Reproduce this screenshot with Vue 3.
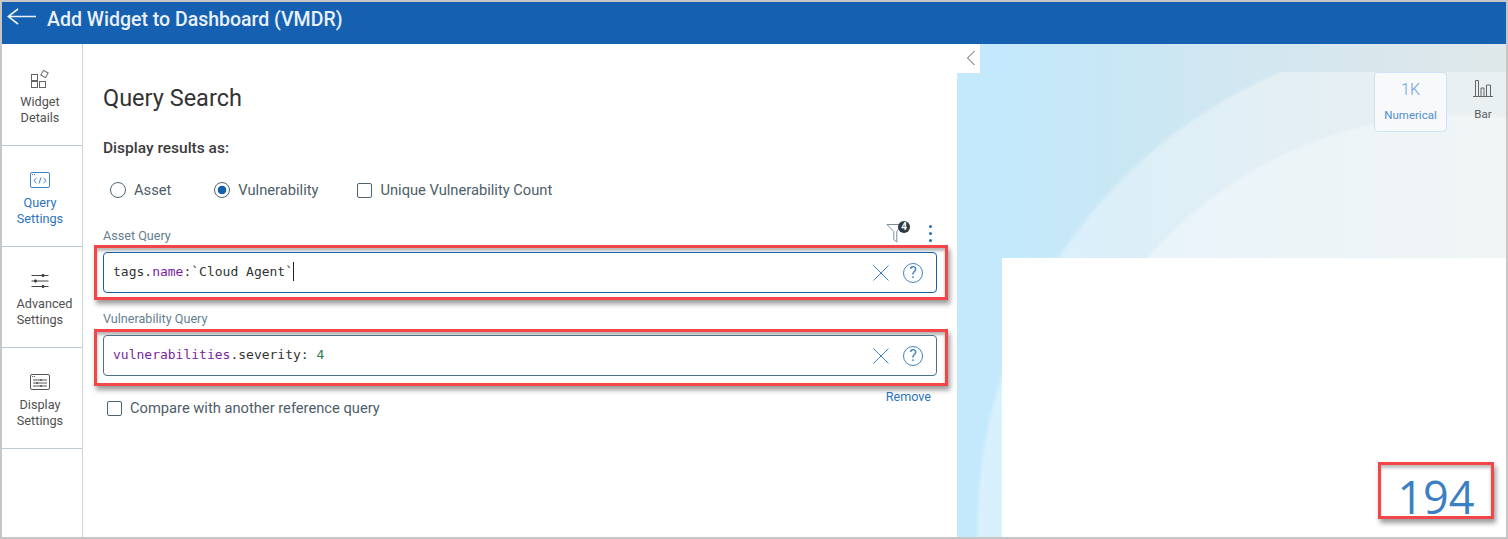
<script setup>
const navItems = [
  { id: 'widget', label: ['Widget', 'Details'] },
  { id: 'query', label: ['Query', 'Settings'], active: true },
  { id: 'advanced', label: ['Advanced', 'Settings'] },
  { id: 'display', label: ['Display', 'Settings'] },
]
</script>

<template>
  <div class="frame">
    <header class="topbar">
      <svg class="back" width="30" height="20" viewBox="0 0 30 20" fill="none" stroke="#e9f0f8" stroke-width="1.6">
        <path d="M1 9.5H29M11 2L1.2 9.5L11 17" />
      </svg>
      <h1>Add Widget to Dashboard (VMDR)</h1>
    </header>
    <div class="body">
      <nav class="side">
        <div v-for="n in navItems" :key="n.id" class="nav-item" :class="{ active: n.active }">
          <svg v-if="n.id === 'widget'" width="20" height="20" viewBox="0 0 20 20" fill="none" stroke="#666" stroke-width="1">
            <rect x="1.5" y="5.5" width="6" height="6" /><rect x="1.5" y="12.5" width="6" height="6" /><rect x="9.5" y="12.5" width="6" height="6" />
            <rect x="11.8" y="2.3" width="5.4" height="5.4" transform="rotate(30 14.5 5)" />
          </svg>
          <svg v-else-if="n.id === 'query'" width="20" height="20" viewBox="0 0 20 20" fill="none" stroke="#3a82c9" stroke-width="1">
            <rect x="0.5" y="2.5" width="19" height="15" rx="1.5" />
            <path d="M2 4.5H6" stroke-dasharray="1 1" />
            <path d="M6.5 8L3.8 10.5L6.5 13M13.5 8L16.2 10.5L13.5 13M11 7.5L9 13.5" />
          </svg>
          <svg v-else-if="n.id === 'advanced'" width="20" height="20" viewBox="0 0 20 20" fill="none" stroke="#444" stroke-width="1">
            <path d="M1.5 4.5H18.5M1.5 10H18.5M1.5 15.5H18.5" />
            <circle cx="13" cy="4.5" r="1.2" fill="#444" /><circle cx="5.5" cy="10" r="1.2" fill="#444" /><circle cx="13" cy="15.5" r="1.2" fill="#444" />
          </svg>
          <svg v-else width="20" height="20" viewBox="0 0 20 20" fill="none" stroke="#555" stroke-width="1">
            <rect x="0.5" y="2.5" width="19" height="15" rx="1.5" />
            <path d="M2 4.5H6" stroke-dasharray="1 1" />
            <path d="M3 8H17M3 11H17M3 14H17" />
            <path d="M11 7V9M7 10V12M11 13V15" stroke-width="1.5" />
          </svg>
          <span class="nav-label">{{ n.label[0] }}<br />{{ n.label[1] }}</span>
        </div>
      </nav>

      <main class="panel">
        <h2>Query Search</h2>
        <div class="display-label">Display results as:</div>
        <div class="options">
          <label class="opt opt-asset"><span class="radio"></span>Asset</label>
          <label class="opt opt-vuln"><span class="radio on"></span>Vulnerability</label>
          <label class="opt"><span class="check"></span>Unique Vulnerability Count</label>
        </div>

        <div class="field-head">
          <span class="field-label head-label">Asset Query</span>
          <div class="tools">
            <span class="filter">
              <svg width="20" height="22" viewBox="0 0 20 22" fill="none" stroke="#7c8f9d" stroke-width="1">
                <path d="M1 3.5H16L10.8 10.5V21L7.8 18.5V10.5Z" />
              </svg>
              <span class="badge">4</span>
            </span>
            <span class="kebab"><i></i><i></i><i></i></span>
          </div>
        </div>
        <div class="redbox first">
          <div class="query focus">
            <code><span>tags.</span><span class="kw">name</span><span>:`Cloud Agent`</span><span class="caret"></span></code>
            <svg class="ic" width="18" height="18" viewBox="0 0 18 18" fill="none" stroke="#3f82c8" stroke-width="1"><path d="M1.5 1.5L16.5 16.5M16.5 1.5L1.5 16.5" /></svg>
            <span class="help">?</span>
          </div>
        </div>

        <div class="field-label second-label">Vulnerability Query</div>
        <div class="redbox second">
          <div class="query">
            <code><span class="kw">vulnerabilities</span><span>.severity: </span><span class="num">4</span></code>
            <svg class="ic" width="18" height="18" viewBox="0 0 18 18" fill="none" stroke="#3f82c8" stroke-width="1"><path d="M1.5 1.5L16.5 16.5M16.5 1.5L1.5 16.5" /></svg>
            <span class="help">?</span>
          </div>
        </div>

        <div class="foot">
          <label class="opt compare"><span class="check"></span>Compare with another reference query</label>
          <a class="remove">Remove</a>
        </div>
      </main>

      <section class="preview">
        <div class="collapse">
          <svg width="10" height="16" viewBox="0 0 10 16" fill="none" stroke="#555" stroke-width="1"><path d="M8.5 1L1.5 8L8.5 15" /></svg>
        </div>
        <div class="band"></div>
        <div class="stage">
          <div class="types">
            <div class="type selected">
              <span class="k">1K</span>
              <span class="t">Numerical</span>
            </div>
            <div class="type bar">
              <svg width="20" height="18" viewBox="0 0 20 18" fill="none" stroke="#666" stroke-width="1">
                <path d="M0 17.5H20M2.5 17V1.5H5.5V17M8 17V9H11V17M13.5 17V6H14.5M14.5 6H17.5V17" />
              </svg>
              <span class="t">Bar</span>
            </div>
          </div>
          <div class="card">
            <div class="count">194</div>
          </div>
        </div>
      </section>
    </div>
  </div>
</template>

<style>
html, body { margin: 0; background: #fff; }
</style>

<style scoped>
.frame {
  box-sizing: border-box;
  width: 1508px;
  height: 539px;
  border: 2px solid #c6c6c6;
  display: flex;
  flex-direction: column;
  overflow: hidden;
  font-family: Roboto, "Liberation Sans", sans-serif;
  color: #444;
}
.topbar {
  height: 42px;
  flex: none;
  background: #1560b0;
  display: flex;
  align-items: flex-start;
  padding-left: 5px;
  gap: 10px;
}
.back { margin-top: 5px; }
.topbar h1 {
  margin: 0;
  font-size: 19.5px;
  font-weight: 500;
  line-height: 36px;
  color: #e9f0f8;
}
.body { flex: 1; display: flex; min-height: 0; }
.side {
  box-sizing: border-box;
  width: 81px;
  flex: none;
  border-right: 1px solid #c8d3dc;
  background: #fff;
  padding-top: 1px;
}
.nav-item {
  box-sizing: border-box;
  height: 101px;
  border-bottom: 1px solid #bcc9d2;
  display: flex;
  flex-direction: column;
  align-items: center;
  padding: 24px 4px 0 0;
  color: #4f4f4f;
}
.nav-item.active { color: #2a74c0; }
.nav-label {
  width: 47px;
  font-size: 12.7px;
  line-height: 16px;
  text-align: center;
  margin-top: 5px;
}
.panel {
  box-sizing: border-box;
  width: 874px;
  flex: none;
  padding: 0 20px;
  background: #fff;
}
.panel h2 {
  margin: 39px 0 0;
  font-size: 23.5px;
  font-weight: 400;
  line-height: 30px;
  color: #333;
}
.display-label {
  margin-top: 25px;
  font-size: 15.5px;
  font-weight: 500;
  line-height: 20px;
  color: #3c3c3c;
}
.options {
  display: flex;
  align-items: center;
  margin-top: 22px;
  padding-left: 7px;
  height: 20px;
}
.opt {
  display: flex;
  align-items: center;
  gap: 8px;
  font-size: 14.7px;
  color: #4e5d68;
}
.opt-asset { margin-right: 43px; }
.opt-vuln { margin-right: 39px; }
.radio {
  box-sizing: border-box;
  width: 16px;
  height: 16px;
  border-radius: 50%;
  border: 1px solid #4e6472;
  display: inline-block;
}
.radio.on {
  background: radial-gradient(circle, #1560b0 0 4px, transparent 4.6px);
}
.check {
  box-sizing: border-box;
  width: 15px;
  height: 15px;
  border: 1px solid #4e6472;
  border-radius: 2px;
  display: inline-block;
}
.field-head {
  display: flex;
  justify-content: space-between;
  align-items: flex-end;
  margin-top: 15px;
  height: 30px;
}
.field-label {
  font-size: 12.6px;
  line-height: 16px;
  color: #66808f;
}
.head-label { margin-bottom: 1px; }
.tools { display: flex; align-items: flex-start; height: 26px; padding-right: 3px; }
.filter { position: relative; width: 20px; height: 22px; margin-top: 2px; margin-right: 20px; }
.badge {
  position: absolute;
  left: 12px;
  top: 0;
  width: 12px;
  height: 12px;
  border-radius: 50%;
  background: #2f3a42;
  color: #fff;
  font-size: 10px;
  font-weight: 700;
  line-height: 12px;
  text-align: center;
}
.kebab { display: flex; flex-direction: column; gap: 4px; margin-top: 6px; width: 8px; align-items: center; }
.kebab i { width: 3px; height: 3px; border-radius: 50%; background: #1e6fbf; }
.redbox {
  box-sizing: border-box;
  margin: 0 -11px 0 -9px;
  border: 3px solid #f44548;
  box-shadow: 2px 4px 5px rgba(0, 0, 0, .4), inset 0 3px 3px rgba(0, 0, 0, .28);
  background: #fff;
}
.redbox.first { padding: 4px 8px 4px 6px; height: 55px; }
.redbox.second { padding: 3px 8px 7px 6px; height: 57px; }
.query {
  box-sizing: border-box;
  height: 41px;
  border: 1px solid #4f6f82;
  border-radius: 4px;
  display: flex;
  align-items: center;
  padding: 0 13px 0 9px;
  background: #fff;
}
.query.focus { border-color: #1560b0; }
.query code {
  flex: 1;
  display: flex;
  align-items: center;
  padding-bottom: 2px;
  font-family: "DejaVu Sans Mono", monospace;
  font-size: 13px;
  white-space: pre;
  color: #333;
}
.kw { color: #7b1fa2; }
.num { color: #2e7d4f; }
.caret { width: 1px; height: 19px; background: #222; margin-left: 0; }
.ic { margin-right: 13px; }
.help {
  box-sizing: border-box;
  width: 20px;
  height: 20px;
  border: 1px solid #3f82c8;
  border-radius: 50%;
  color: #3f82c8;
  font-size: 16px;
  line-height: 18px;
  text-align: center;
}
.second-label { margin-top: 11px; height: 18px; }
.foot {
  display: flex;
  justify-content: space-between;
  height: 40px;
}
.compare { margin: 12px 0 0 4px; height: 20px; color: #4e5d68; }
.remove {
  font-size: 12.6px;
  line-height: 16px;
  margin: 3px 6px 0 0;
  color: #2a72bc;
}
.preview {
  position: relative;
  flex: 1;
  min-width: 0;
  display: flex;
  flex-direction: column;
  background: #c5e9fb;
}
.collapse {
  position: absolute;
  left: 0;
  top: 0;
  box-sizing: border-box;
  width: 23px;
  height: 29px;
  padding: 0 0 2px 4px;
  background: #fff;
  display: flex;
  align-items: center;
  justify-content: center;
}
.band {
  height: 28px;
  flex: none;
  background: linear-gradient(90deg, #c4e9fc 8%, #c9e7f4 31%, #cfe7f2 44%, #d8e7ed 73%, #dfe8ea 100%);
}
.stage {
  flex: 1;
  min-height: 0;
  display: flex;
  flex-direction: column;
  background:
    radial-gradient(circle 415px at 503px 456px, rgba(255, 255, 255, .32) 99%, rgba(255, 255, 255, 0) 100%),
    radial-gradient(circle 500px at 518px 458px, rgba(255, 255, 255, .35) 99%, rgba(255, 255, 255, 0) 100%),
    linear-gradient(90deg, #c4e9fc 8%, #c9e7f4 31%, #cfe7f2 44%, #d8e7ed 73%, #dfe8ea 100%);
}
.types {
  height: 186px;
  flex: none;
  display: flex;
  justify-content: flex-end;
  align-items: flex-start;
  padding-right: 5px;
  gap: 18px;
}
.type {
  display: flex;
  flex-direction: column;
  align-items: center;
}
.type.selected {
  box-sizing: border-box;
  width: 73px;
  height: 60px;
  border: 1px solid #cfe2f5;
  border-radius: 4px;
  background: #f7f9fa;
  padding-top: 6px;
}
.type.selected .k { font-size: 16px; font-weight: 300; line-height: 21px; color: #6f9fd6; }
.type.selected .t { font-size: 11.5px; line-height: 16px; margin-top: 7px; color: #4f8fd0; }
.type.bar { width: 36px; padding-top: 7px; }
.type.bar .t { font-size: 11.5px; line-height: 16px; margin-top: 9px; color: #5c5c5c; }
.card {
  flex: 1;
  margin-left: 45px;
  background: #fff;
  display: flex;
  justify-content: flex-end;
  align-items: flex-end;
  padding: 0 12px 18px 0;
}
.count {
  box-sizing: border-box;
  width: 116px;
  height: 57px;
  border: 3px solid #f44548;
  box-shadow: 2px 4px 5px rgba(0, 0, 0, .4), inset 0 3px 3px rgba(0, 0, 0, .25);
  font-family: "Open Sans", sans-serif;
  font-size: 45px;
  line-height: 46px;
  padding-top: 9px;
  color: #3a7fc4;
  text-align: center;
}
</style>
